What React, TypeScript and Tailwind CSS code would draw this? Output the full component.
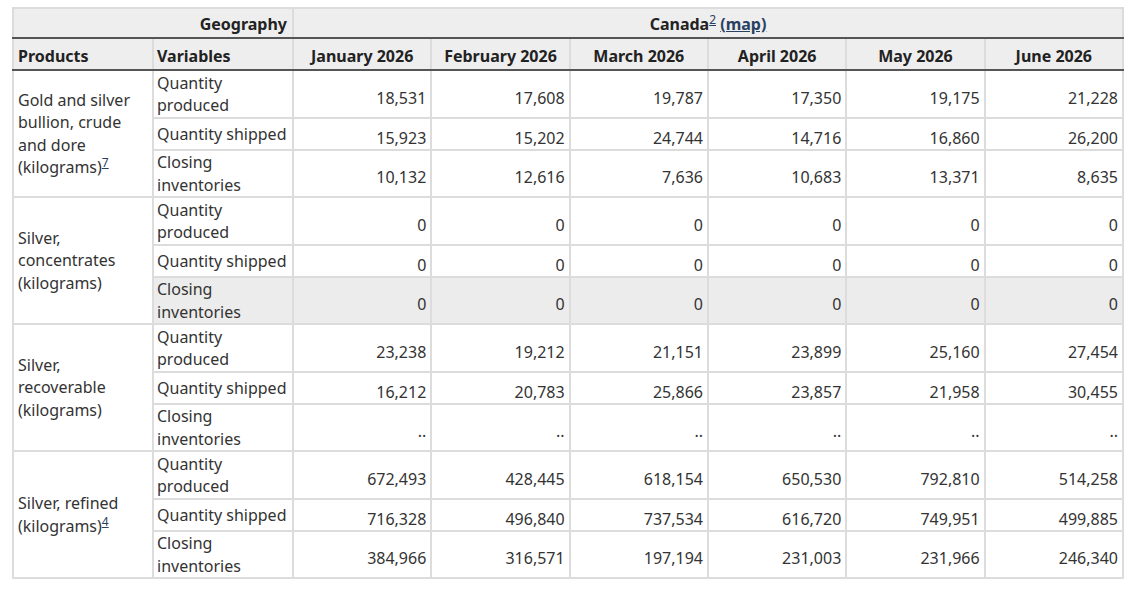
import React from "react"

interface Row {
  variable: string
  values: string[]
  highlight?: boolean
}

interface Group {
  product: React.ReactNode
  rows: Row[]
}

const months = ["January 2026", "February 2026", "March 2026", "April 2026", "May 2026", "June 2026"]

const Note = ({ n }: { n: string }) => (
  <sup className="text-[12px] font-normal leading-none text-[#284162] underline">{n}</sup>
)

const groups: Group[] = [
  {
    product: (
      <>
        Gold and silver bullion, crude and dore (kilograms)
        <Note n="7" />
      </>
    ),
    rows: [
      { variable: "Quantity produced", values: ["18,531", "17,608", "19,787", "17,350", "19,175", "21,228"] },
      { variable: "Quantity shipped", values: ["15,923", "15,202", "24,744", "14,716", "16,860", "26,200"] },
      { variable: "Closing inventories", values: ["10,132", "12,616", "7,636", "10,683", "13,371", "8,635"] },
    ],
  },
  {
    product: <>Silver, concentrates (kilograms)</>,
    rows: [
      { variable: "Quantity produced", values: ["0", "0", "0", "0", "0", "0"] },
      { variable: "Quantity shipped", values: ["0", "0", "0", "0", "0", "0"] },
      { variable: "Closing inventories", values: ["0", "0", "0", "0", "0", "0"], highlight: true },
    ],
  },
  {
    product: <>Silver, recoverable (kilograms)</>,
    rows: [
      { variable: "Quantity produced", values: ["23,238", "19,212", "21,151", "23,899", "25,160", "27,454"] },
      { variable: "Quantity shipped", values: ["16,212", "20,783", "25,866", "23,857", "21,958", "30,455"] },
      { variable: "Closing inventories", values: ["..", "..", "..", "..", "..", ".."] },
    ],
  },
  {
    product: (
      <>
        Silver, refined (kilograms)
        <Note n="4" />
      </>
    ),
    rows: [
      { variable: "Quantity produced", values: ["672,493", "428,445", "618,154", "650,530", "792,810", "514,258"] },
      { variable: "Quantity shipped", values: ["716,328", "496,840", "737,534", "616,720", "749,951", "499,885"] },
      { variable: "Closing inventories", values: ["384,966", "316,571", "197,194", "231,003", "231,966", "246,340"] },
    ],
  },
]

export default function App() {
  return (
    <div className="min-h-screen bg-white pt-[7px] pl-[12px] font-['Noto_Sans',sans-serif] text-[16px] text-[#333]">
      <table className="w-[1112px] table-fixed border-collapse border-2 border-[#dcdcdc]">
        <colgroup>
          <col className="w-[140px]" />
          <col className="w-[140px]" />
          {months.map((m) => (
            <col key={m} />
          ))}
        </colgroup>
        <thead>
          <tr className="h-[30px] bg-[#eeeeee] text-[#222]">
            <th
              colSpan={2}
              className="border-2 border-[#dcdcdc] border-b-[#555] px-[5px] pt-[2px] text-right align-middle font-bold leading-[22px]"
            >
              Geography
            </th>
            <th
              colSpan={6}
              className="border-2 border-[#dcdcdc] border-b-[#555] px-[5px] pt-[2px] text-center align-middle font-bold leading-[22px]"
            >
              Canada<Note n="2" />{" "}
              <a href="#" className="text-[#284162] underline">
                (map)
              </a>
            </th>
          </tr>
          <tr className="h-[32px] bg-[#eeeeee] text-[#222]">
            <th className="border-2 border-[#dcdcdc] border-b-[#555] px-[4px] pt-[3px] text-left font-bold leading-[22px]">
              Products
            </th>
            <th className="border-2 border-[#dcdcdc] border-b-[#555] px-[3px] pt-[3px] text-left font-bold leading-[22px]">
              Variables
            </th>
            {months.map((m) => (
              <th
                key={m}
                className="border-2 border-[#dcdcdc] border-b-[#555] px-[5px] pt-[3px] text-center font-bold leading-[22px] whitespace-nowrap"
              >
                {m}
              </th>
            ))}
          </tr>
        </thead>
        <tbody>
          {groups.map((g, gi) =>
            g.rows.map((r, ri) => (
              <tr
                key={`${gi}-${ri}`}
                className={`${ri === 0 ? "h-[48px]" : ri === 1 ? "h-[32px]" : "h-[47px]"} ${r.highlight ? "bg-[#ececec]" : ""}`}
              >
                {ri === 0 && (
                  <td
                    rowSpan={3}
                    className="border-2 border-[#dcdcdc] bg-white pl-[4px] pr-[4px] align-middle leading-[22.5px]"
                  >
                    {g.product}
                  </td>
                )}
                <td className="border-2 border-[#dcdcdc] pl-[3px] pr-[2px] py-0 align-middle leading-[22.5px]">
                  {r.variable}
                </td>
                {r.values.map((v, vi) => (
                  <td
                    key={vi}
                    className="border-2 border-[#dcdcdc] pl-[5px] pr-[4px] pt-[7px] pb-0 text-right align-middle leading-[22px]"
                  >
                    {v}
                  </td>
                ))}
              </tr>
            ))
          )}
        </tbody>
      </table>
    </div>
  )
}
